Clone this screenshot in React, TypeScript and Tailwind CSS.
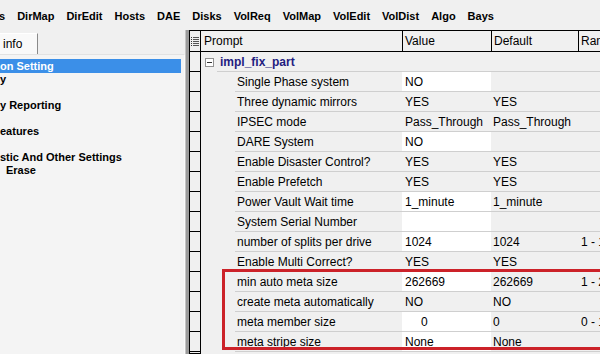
import React from 'react';

type Row = {
    prompt: string;
    value: string;
    def: string;
    range?: string;
    white?: boolean;
    numIndent?: boolean;
};

const menuItems = ['s', 'DirMap', 'DirEdit', 'Hosts', 'DAE', 'Disks', 'VolReq', 'VolMap', 'VolEdit', 'VolDist', 'Algo', 'Bays'];

const treeItems: { label: string; selected?: boolean; indent?: boolean }[] = [
    { label: 'on Setting', selected: true },
    { label: 'y' },
    { label: '' },
    { label: 'y Reporting' },
    { label: '' },
    { label: 'eatures' },
    { label: '' },
    { label: 'stic And Other Settings' },
    { label: 'Erase', indent: true },
];

const rows: Row[] = [
    { prompt: 'Single Phase system', value: 'NO', def: '', white: true },
    { prompt: 'Three dynamic mirrors', value: 'YES', def: 'YES' },
    { prompt: 'IPSEC mode', value: 'Pass_Through', def: 'Pass_Through' },
    { prompt: 'DARE System', value: 'NO', def: '', white: true },
    { prompt: 'Enable Disaster Control?', value: 'YES', def: 'YES' },
    { prompt: 'Enable Prefetch', value: 'YES', def: 'YES' },
    { prompt: 'Power Vault Wait time', value: '1_minute', def: '1_minute', white: true },
    { prompt: 'System Serial Number', value: '', def: '', white: true },
    { prompt: 'number of splits per drive', value: '1024', def: '1024', range: '1 - 1024', white: true },
    { prompt: 'Enable Multi Correct?', value: 'YES', def: 'YES' },
    { prompt: 'min auto meta size', value: '262669', def: '262669', range: '1 - 262669', white: true },
    { prompt: 'create meta automatically', value: 'NO', def: 'NO' },
    { prompt: 'meta member size', value: '0', def: '0', range: '0 - 1024', white: true, numIndent: true },
    { prompt: 'meta stripe size', value: 'None', def: 'None', white: true },
];

const ListIcon = () => (
    <svg width="8" height="11" viewBox="0 0 8 11" className="block">
        {[1, 3, 5, 7, 9].map(y => (
            <g key={y}>
                <rect x="0" y={y} width="1" height="1" fill="#333" />
                <rect x="2" y={y} width="6" height="1" fill="#555" />
            </g>
        ))}
    </svg>
);

const MinusBox = () => (
    <svg width="9" height="9" viewBox="0 0 9 9" className="block">
        <rect x="0.5" y="0.5" width="8" height="8" fill="#fff" stroke="#919191" />
        <rect x="2" y="4" width="5" height="1" fill="#333" />
    </svg>
);

const RowHeaderCell = () => (
    <div className="w-[12px] shrink-0 border-l border-r border-b border-black bg-[#f0f0f0]" />
);

const App: React.FC = () => {
    return (
        <div className="relative w-[600px] h-[354px] overflow-hidden bg-[#f0f0f0] font-['Liberation_Sans',Arial,sans-serif] text-black">
            {/* menu bar */}
            <div className="h-[30px] flex items-center gap-[12px] -ml-px text-[11px] font-bold whitespace-nowrap pt-[3px]">
                {menuItems.map(m => (
                    <span key={m}>{m}</span>
                ))}
            </div>

            <div className="flex h-[324px]">
                {/* left side */}
                <div className="w-[185px] shrink-0 flex flex-col">
                    <div className="h-[24px] pt-[3px] flex">
                        <div className="w-[38px] h-[21px] bg-[#f9f9f9] border-r border-[#8a8a8a] border-t border-t-white text-[12px] pl-[3px] flex items-center">
                            info
                        </div>
                    </div>
                    <div className="flex-1 bg-[#f4f4f4] border-t border-[#e2e2e2] border-r border-r-[#fbfbfb] pt-[4px]">
                        {treeItems.map((t, i) => (
                            <div
                                key={i}
                                className={`h-[13px] flex items-center text-[11px] font-bold whitespace-nowrap leading-none ${t.selected ? 'bg-[#3b8fe8] text-white mr-[3px] h-[14px]' : ''} ${t.indent ? 'pl-[6px]' : ''}`}
                            >
                                {t.label}
                            </div>
                        ))}
                    </div>
                </div>

                {/* splitter */}
                <div className="w-[4px] shrink-0 bg-[#9a9a9a] border-l border-[#c4c4c4]" />

                {/* grid */}
                <div className="flex-1 flex flex-col text-[12px] whitespace-nowrap overflow-hidden">
                    <div className="h-[22px] flex border-t border-b border-black">
                        <div className="w-[12px] shrink-0 border-l border-r border-black flex items-center justify-center">
                            <ListIcon />
                        </div>
                        <div className="w-[202px] shrink-0 border-r border-black pl-[3px] flex items-center">Prompt</div>
                        <div className="w-[89px] shrink-0 border-r border-black pl-[2px] flex items-center">Value</div>
                        <div className="w-[87px] shrink-0 border-r border-black pl-[2px] flex items-center">Default</div>
                        <div className="flex-1 pl-[2px] flex items-center">Range</div>
                    </div>

                    {/* group row */}
                    <div className="h-[20px] flex shrink-0">
                        <RowHeaderCell />
                        <div className="w-[16px] shrink-0 pl-[4px] flex items-center">
                            <MinusBox />
                        </div>
                        <div className="flex-1 border-b border-[#cfcfcf] pl-[3px] flex items-center font-bold text-[#1f2080]">
                            impl_fix_part
                        </div>
                    </div>

                    {rows.map(r => (
                        <div key={r.prompt} className="h-[20px] flex shrink-0">
                            <RowHeaderCell />
                            <div className="w-[34px] shrink-0" />
                            <div className="flex-1 flex border-b border-[#cfcfcf]">
                                <div className="w-[167px] shrink-0 pl-[2px] flex items-center">{r.prompt}</div>
                                <div className={`w-[89px] shrink-0 flex items-center ${r.numIndent ? 'pl-[19px]' : 'pl-[3px]'} ${r.white ? 'bg-white' : ''}`}>
                                    {r.value}
                                </div>
                                <div className="w-[87px] shrink-0 pl-[2px] flex items-center">{r.def}</div>
                                <div className="flex-1 pl-[3px] flex items-center">{r.range}</div>
                            </div>
                        </div>
                    ))}
                    <div className="flex-1 flex">
                        <RowHeaderCell />
                    </div>
                </div>
            </div>

            {/* highlight box */}
            <div className="absolute left-[222px] top-[269px] w-[400px] h-[81px] border-[3px] border-[#cc2229] pointer-events-none" />
        </div>
    );
};

export default App;
